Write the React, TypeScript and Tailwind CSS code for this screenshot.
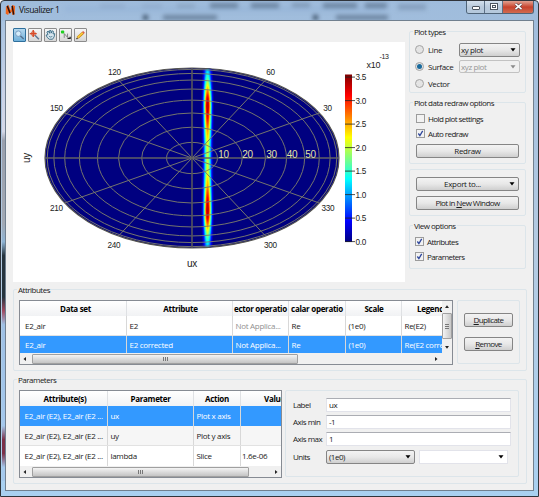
import type { ReactNode } from "react";

const CX = 179;
const CY = 116;
const RX = 147;
const RY = 90;

// peak intensity of the beam against the distance from the horizontal axis
const PROFILE = [
  [0, 0.58],
  [15, 0.62],
  [28, 0.74],
  [40, 0.9],
  [52, 1],
  [60, 0.93],
  [68, 0.74],
  [76, 0.55],
  [84, 0.4],
  [90, 0.3],
];

function intensity(dy: number) {
  const d = Math.abs(dy);
  for (let i = 1; i < PROFILE.length; i++) {
    const [x0, a0] = PROFILE[i - 1];
    const [x1, a1] = PROFILE[i];
    if (d <= x1) return a0 + ((a1 - a0) * (d - x0)) / (x1 - x0);
  }
  return 0;
}

function jet(v: number) {
  const c = (n: number) =>
    Math.round(255 * Math.max(0, Math.min(1, 1.5 - Math.abs(4 * v - n))));
  return `rgb(${c(3)},${c(2)},${c(1)})`;
}

const LEVELS = Array.from({ length: 30 }, (_, i) => 0.04 + i * 0.031);

function contour(level: number, side: 1 | -1) {
  const right: string[] = [];
  const left: string[] = [];
  for (let y = -RY; y <= RY; y += 1) {
    if (y * side < 0) continue;
    const a = intensity(y);
    const w = a > level ? 2.5 * Math.sqrt(2 * Math.log(a / level)) : 0;
    right.push(`${(194.6 + w).toFixed(2)},${CY + y}`);
    left.unshift(`${(194.6 - w).toFixed(2)},${CY + y}`);
  }
  return right.concat(left).join(" ");
}

const ANGLES = [
  { t: "120", x: 101.5, y: 32.5 },
  { t: "60", x: 257.5, y: 32.5 },
  { t: "150", x: 43.5, y: 69 },
  { t: "30", x: 314.5, y: 69 },
  { t: "210", x: 43.5, y: 169.3 },
  { t: "330", x: 315, y: 169.3 },
  { t: "240", x: 101, y: 206.3 },
  { t: "300", x: 257.5, y: 206.3 },
];

const RINGS = [
  { t: "10", x: 210.5 },
  { t: "20", x: 234.5 },
  { t: "30", x: 258.5 },
  { t: "40", x: 279 },
  { t: "50", x: 297.5 },
];

function PolarPlot() {
  return (
    <svg
      width="392"
      height="240"
      viewBox="0 0 392 240"
      className="block font-['Liberation_Sans']"
    >
      <defs>
        <clipPath id="disc">
          <ellipse cx={CX} cy={CY} rx={RX} ry={RY} />
        </clipPath>
        <linearGradient id="jet" x1="0" y1="1" x2="0" y2="0">
          {Array.from({ length: 17 }, (_, i) => (
            <stop key={i} offset={i / 16} stopColor={jet(i / 16)} />
          ))}
        </linearGradient>
      </defs>
      <rect width="392" height="240" fill="#fff" />
      <g clipPath="url(#disc)">
        <rect x="30" y="20" width="300" height="190" fill="#000080" />
        {LEVELS.map((l) => (
          <g key={l} fill={jet(l)}>
            <polygon points={contour(l, -1)} />
            <polygon points={contour(l, 1)} />
          </g>
        ))}
      </g>
      <g fill="none" stroke="#7a7a6c" strokeWidth="0.95">
        {[10, 20, 30, 40, 50, 60, 70, 80].map((d) => {
          const s = Math.sin((d * Math.PI) / 180);
          return <ellipse key={d} cx={CX} cy={CY} rx={RX * s} ry={RY * s} />;
        })}
        <ellipse cx={CX} cy={CY} rx={RX} ry={RY} stroke="#55554f" strokeWidth="1.2" />
        {[30, 60, 120, 150, 210, 240, 300, 330].map((d) => {
          const a = (d * Math.PI) / 180;
          return (
            <line
              key={d}
              x1={CX}
              y1={CY}
              x2={CX + RX * Math.cos(a)}
              y2={CY - RY * Math.sin(a)}
            />
          );
        })}
        <line x1={CX} y1={CY - RY} x2={CX} y2={CY + RY} stroke="#55555c" strokeWidth="1.6" />
        <line x1={CX - RX} y1={CY} x2={CX + RX} y2={CY} stroke="#606064" strokeWidth="1.5" />
      </g>
      <g fontSize="10" fill="#e4e4a4" textAnchor="middle">
        {RINGS.map((r) => (
          <text key={r.t} x={r.x} y="116.3">
            {r.t}
          </text>
        ))}
      </g>
      <g fontSize="8.2" fill="#222" textAnchor="middle">
        {ANGLES.map((a) => (
          <text key={a.t} x={a.x} y={a.y}>
            {a.t}
          </text>
        ))}
      </g>
      <g fontSize="10" fill="#222" textAnchor="middle">
        <text x="179" y="225">
          ux
        </text>
        <text transform="translate(16.5 116) rotate(-90)">uy</text>
      </g>
      <rect x="332" y="32.5" width="7" height="167.5" fill="url(#jet)" />
      <g fontSize="8.2" fill="#222">
        {[0, 1, 2, 3, 4, 5, 6, 7].map((i) => (
          <g key={i}>
            <line
              x1="332"
              x2="342"
              y1={199.6 - i * 23.5}
              y2={199.6 - i * 23.5}
              stroke="#222"
              strokeWidth="0.8"
            />
            <text x="342.5" y={202.6 - i * 23.5}>
              {(i / 2).toFixed(1)}
            </text>
          </g>
        ))}
        <text x="353.5" y="25.5" fontSize="9">
          x10
        </text>
        <text x="366.5" y="17" fontSize="7">
          -13
        </text>
      </g>
    </svg>
  );
}

function ToolButton({ active, children }: { active?: boolean; children: ReactNode }) {
  return (
    <div
      className={
        active
          ? "w-[13.3px] h-[14px] rounded-[1px] border border-[#2f6f9c] bg-gradient-to-b from-[#b5d8ee] to-[#6fb0da]"
          : "w-[13.3px] h-[14px] rounded-[1px] border border-[#8c8c8c] bg-gradient-to-b from-[#f6f6f6] to-[#d6d6d6]"
      }
    >
      <svg viewBox="0 0 12 12" className="block size-full" fill="none">
        {children}
      </svg>
    </div>
  );
}

function Toolbar() {
  return (
    <div className="flex gap-[2px] h-[14px]">
      <ToolButton active>
        <path d="M6.7 6.7 L10.3 10.3" stroke="#56708c" strokeWidth="1.5" />
        <circle cx="4.6" cy="4.6" r="2.9" fill="#d4ecfa" stroke="#6f93b8" strokeWidth=".9" />
      </ToolButton>
      <ToolButton>
        <path d="M6 6 L10.5 10.5" stroke="#5d7896" strokeWidth="1.6" />
        <circle cx="4.5" cy="4.5" r="2.3" fill="#f6b49c" stroke="#c86a50" strokeWidth=".8" />
        <path d="M4.5 .8 V8.2 M.8 4.5 H8.2" stroke="#d84a28" strokeWidth="1.5" />
      </ToolButton>
      <ToolButton>
        <path
          d="M3.2 5.6 L2 2.8 L3.4 1.8 L4.9 4.2 L4.9 1.2 L6.3 1.2 L6.6 4 L7.6 1.5 L9 2.2 L8.5 4.8 L10.4 4.6 L9.7 8 L8 10.5 H4.5 L2.2 8.4 L1.2 6 Z"
          fill="#d8e6ee"
          stroke="#2f6580"
          strokeWidth=".9"
        />
        <path d="M4.2 7 C5 8.6 7 8.6 7.8 7" stroke="#2f6580" strokeWidth=".8" />
      </ToolButton>
      <ToolButton>
        <path d="M4.5 4.5 V9 M4.5 4.5 L8 8.5 V4.5" stroke="#777" strokeWidth=".9" />
        <rect x="1" y="1.2" width="3.5" height="3.2" rx="1" fill="#20d020" />
        <path d="M8 9.5 H10.8 V7.8" stroke="#222" strokeWidth="1.3" />
      </ToolButton>
      <ToolButton>
        <path d="M2.8 9 L8.6 3.6" stroke="#c88a10" strokeWidth="2.8" />
        <path d="M3 8.6 L8.6 3.4" stroke="#ffd040" strokeWidth="1.5" />
        <path d="M8.3 3.9 L9.6 2.7" stroke="#d8604c" strokeWidth="2.6" />
        <path d="M1.5 10.3 L2.8 9.1" stroke="#5a4a30" strokeWidth="1.5" />
      </ToolButton>
    </div>
  );
}

function Group({
  title,
  className,
  children,
}: {
  title?: string;
  className: string;
  children: ReactNode;
}) {
  return (
    <div className={"relative rounded-[2px] border border-[#dce5ea] " + className}>
      {title && (
        <span className="absolute left-[3px] -top-[6px] h-[11px] leading-[11px] px-px bg-[#f0f0f0] tracking-[-0.5px]">
          {title}
        </span>
      )}
      {children}
    </div>
  );
}

function Arrow({ className = "text-black" }: { className?: string }) {
  return (
    <svg width="6" height="4" viewBox="0 0 6 4" className={"shrink-0 " + className}>
      <path d="M.5 .2 H5.5 L3 3.6 Z" fill="currentColor" />
    </svg>
  );
}

function Button({ className, children }: { className: string; children: ReactNode }) {
  return (
    <div
      className={
        "flex items-center justify-center h-[14px] rounded-[2px] border border-[#858585] bg-gradient-to-b from-[#f3f3f3] via-[#e8e8e8] to-[#cfcfcf] " +
        className
      }
    >
      {children}
    </div>
  );
}

function Radio({ label, on }: { label: string; on?: boolean }) {
  return (
    <div className="flex items-center gap-[4px] w-[44px]">
      <span className="flex items-center justify-center size-[9px] rounded-full border border-[#a4a4a4] bg-[#e4e4e4]">
        {on && <span className="size-[5px] rounded-full bg-[#1a6a9c]" />}
      </span>
      {label}
    </div>
  );
}

function Check({ label, on }: { label: string; on?: boolean }) {
  return (
    <div className="flex items-center gap-[3px] h-[15px]">
      <span className="size-[9px] border border-[#9c9c9c] bg-[#f2f2f2]">
        {on && (
          <svg viewBox="0 0 8 8" className="block size-full">
            <path d="M1.5 4 L3.3 6.3 L6.5 1" fill="none" stroke="#30489c" strokeWidth="1.5" />
          </svg>
        )}
      </span>
      {label}
    </div>
  );
}

function Sidebar() {
  return (
    <div className="w-[117px] ml-[4px] mt-[10px] tracking-[-0.58px]">
      <Group title="Plot types" className="h-[62px] pt-[9px] pl-[5px]">
        <div className="flex items-center h-[17px] tracking-[-0.4px]">
          <Radio label="Line" />
          <Button className="w-[61px] h-[13px] justify-between! pl-[1px] pr-[3px]">
            xy plot <Arrow />
          </Button>
        </div>
        <div className="flex items-center h-[17px] tracking-[-0.4px]">
          <Radio label="Surface" on />
          <div className="flex items-center justify-between w-[61px] h-[13px] border border-[#c2c2c2] rounded-[2px] pl-[1px] pr-[3px] text-[#969696]">
            xyz plot <Arrow className="text-[#8a8a8a]" />
          </div>
        </div>
        <div className="flex items-center h-[17px] tracking-[-0.4px]">
          <Radio label="Vector" />
        </div>
      </Group>
      <Group title="Plot data redraw options" className="h-[62px] mt-[9px] pt-[8px] pl-[6px]">
        <Check label="Hold plot settings" />
        <Check label="Auto redraw" on />
        <Button className="w-[103px] mt-[3px] tracking-[-0.3px]">Redraw</Button>
      </Group>
      <Group className="h-[47px] mt-[5px] pt-[7px] pl-[6px]">
        <Button className="w-[103px] justify-between! pl-[27px] pr-[3px] tracking-[-0.3px]">
          Export to... <Arrow />
        </Button>
        <Button className="w-[103px] mt-[5px]">
          <span>
            Plot in <u>N</u>ew Window
          </span>
        </Button>
      </Group>
      <Group title="View options" className="h-[44px] mt-[9px] pt-[8px] pl-[5px]">
        <Check label="Attributes" on />
        <Check label="Parameters" on />
      </Group>
    </div>
  );
}

function HScroll({ thumb, className }: { thumb: string; className: string }) {
  return (
    <div className={"flex items-center h-[11px] bg-[#f0f0f0] px-[3px] " + className}>
      <svg width="3" height="4" viewBox="0 0 3 4" className="mr-[6px]">
        <path d="M3 0 V4 L.5 2 Z" fill="#222" />
      </svg>
      <div
        className={
          "flex items-center justify-center gap-px h-[10px] rounded-[1px] border border-[#a0a0a0] bg-gradient-to-b from-[#f4f4f4] to-[#c4c4c4] " +
          thumb
        }
      >
        <i className="w-px h-[4px] bg-[#777]" />
        <i className="w-px h-[4px] bg-[#777]" />
        <i className="w-px h-[4px] bg-[#777]" />
      </div>
      <svg width="3" height="4" viewBox="0 0 3 4" className="ml-auto">
        <path d="M0 0 V4 L2.5 2 Z" fill="#222" />
      </svg>
    </div>
  );
}

const headRow =
  "grid bg-gradient-to-b from-white to-[#f1f2f4] font-bold text-center text-black";
const headCell =
  "flex items-center justify-center overflow-hidden border-r border-[#dfe1e4]";
const cell = "flex items-center overflow-hidden pl-[2.5px] border-r border-[#d8d8d8]";

const attrCols = "grid-cols-[107px_106px_56px_57px_56px_40px]";
const attrRows = [
  ["E2_air", "E2", "Not Applica...", "Re", "(1e0)", "Re(E2)"],
  ["E2_air", "E2 corrected", "Not Applica...", "Re", "(1e0)", "Re(E2 corrected)"],
];

function AttributeTable() {
  return (
    <div className="flex flex-col w-[434px] h-[65px] border border-[#868b93] bg-white">
      <div className="flex h-[52px]">
        <div className="w-[422px] overflow-hidden">
          <div className={headRow + " h-[15px] " + attrCols}>
            <span className={headCell + " pl-[5px]"}>Data set</span>
            <span className={headCell + " pl-[2px]"}>Attribute</span>
            <span className={headCell}>ector operatio</span>
            <span className={headCell}>calar operatio</span>
            <span className={headCell + " pl-[1px]"}>Scale</span>
            <span className={headCell + " justify-start! pl-[15px] border-r-0!"}>Legend</span>
          </div>
          {attrRows.map((row, r) => (
            <div
              key={r}
              className={
                "grid " +
                attrCols +
                (r === 1 ? " h-[18px] bg-[#3399ff] text-white" : " h-[20px] border-b border-[#e2e2e2]")
              }
            >
              {row.map((t, c) => (
                <span
                  key={c}
                  className={
                    cell +
                    (c === 0 ? " pl-[5px]!" : "") +
                    (c === 5 ? " border-r-0!" : "") +
                    (c === 2 && r === 0 ? " text-[#909090]" : "")
                  }
                >
                  {t}
                </span>
              ))}
            </div>
          ))}
        </div>
        <div className="flex flex-col items-center w-[10px] bg-[#f0f0f0] pt-[4px]">
          <svg width="4" height="3" viewBox="0 0 4 3">
            <path d="M0 3 H4 L2 .3 Z" fill="#222" />
          </svg>
          <div className="flex flex-col items-center justify-center gap-px mt-[5px] w-[10px] h-[26px] rounded-[1px] border border-[#a0a0a0] bg-gradient-to-r from-[#f4f4f4] to-[#c8c8c8]">
            <i className="w-[4px] h-px bg-[#777]" />
            <i className="w-[4px] h-px bg-[#777]" />
            <i className="w-[4px] h-px bg-[#777]" />
          </div>
          <svg width="4" height="3" viewBox="0 0 4 3" className="mt-[7px]">
            <path d="M0 0 H4 L2 2.7 Z" fill="#222" />
          </svg>
        </div>
      </div>
      <HScroll thumb="w-[266px]" className="pr-[14px]" />
    </div>
  );
}

const paramCols = "grid-cols-[88px_86px_47px_40px]";
const paramRows = [
  ["ux", "Plot x axis", ""],
  ["uy", "Plot y axis", ""],
  ["lambda", "Slice", "1.6e-06"],
];

function ParameterTable() {
  return (
    <div className="w-[263px] h-[88px] border border-[#868b93] bg-white">
      <div className={headRow + " h-[15px] " + paramCols}>
        <span className={headCell + " pl-[3px]"}>Attribute(s)</span>
        <span className={headCell}>Parameter</span>
        <span className={headCell}>Action</span>
        <span className={headCell + " justify-start! pl-[23px] border-r-0!"}>Value</span>
      </div>
      {paramRows.map((row, r) => (
        <div
          key={row[0]}
          className={
            "grid " +
            paramCols +
            (r === 0
              ? " h-[20px] bg-[#3399ff] text-white"
              : r === 1
                ? " h-[20px] bg-[#f6f6f6] border-b border-[#e2e2e2]"
                : " h-[20px]")
          }
        >
          <span className={cell + " pl-[4.5px]!"}>E2_air (E2), E2_air (E2 ...</span>
          <span className={cell}>{row[0]}</span>
          <span className={cell}>{row[1]}</span>
          <span className={cell + " pl-[1px]! border-r-0!"}>{row[2]}</span>
        </div>
      ))}
      <HScroll thumb="w-[217px]" className="" />
    </div>
  );
}

function Field({ label, value }: { label: string; value: string }) {
  return (
    <div className="flex items-center h-[17.3px]">
      <span className="w-[33px]">{label}</span>
      <div className="flex items-center w-[185px] h-[14px] pl-[2px] bg-white border border-[#e2e3ea] border-t-[#abadb3]">
        {value}
      </div>
    </div>
  );
}

function TitleBar() {
  return (
    <div className="relative h-[19px] flex items-center overflow-hidden pb-[2px]">
      <div className="absolute inset-0 blur-[2px]">
        <span className="absolute left-[60px] top-[5px] w-[320px] h-[6px] bg-[#8fb0d4]/40" />
        <span className="absolute left-[95px] top-[3px] w-[25px] h-[4px] bg-[#8199b8]/40" />
        <span className="absolute left-[137px] top-[3px] w-[20px] h-[4px] bg-[#8199b8]/40" />
        <span className="absolute left-[172px] top-[3px] w-[18px] h-[4px] bg-[#71879f]/40" />
        <span className="absolute left-[205px] top-[2px] w-[28px] h-[5px] bg-[#4b6079]/60" />
        <span className="absolute left-[246px] top-[2px] w-[28px] h-[5px] bg-[#4b6079]/60" />
        <span className="absolute left-[287px] top-[2px] w-[18px] h-[4px] bg-[#4b6079]/40" />
        <span className="absolute left-[318px] top-[2px] w-[34px] h-[5px] bg-[#4b6079]/60" />
        <span className="absolute left-[360px] top-[2px] w-[22px] h-[5px] bg-[#4b6079]/60" />
        <span className="absolute left-[393px] top-[3px] w-[28px] h-[6px] bg-[#6d86a4]/50" />
        <span className="absolute left-[138px] top-[14px] w-[5px] h-[5px] bg-[#26384c]/80" />
        <span className="absolute left-[158px] top-[14px] w-[54px] h-[5px] bg-[#4b6079]/60" />
        <span className="absolute left-[308px] top-[14px] w-[5px] h-[5px] bg-[#26384c]/80" />
        <span className="absolute left-[331px] top-[14px] w-[52px] h-[5px] bg-[#4b6079]/60" />
      </div>
      <svg width="11" height="12" viewBox="0 0 12 13" className="relative">
        <path d="M1 3 L4 1 L6 7 L8 1 L11 2 L10.5 11 L8 12 L7.5 8 L6 10 L4.5 8 L3.5 12 L.8 10.5 Z" fill="#f0641c" />
        <path d="M2.5 2 L5.5 10 M7.8 2 L9.5 11.5" stroke="#2c0e08" strokeWidth="1.6" />
      </svg>
      <span className="relative ml-[3px] text-[8.6px] tracking-[-0.4px] text-[#111]">
        Visualizer 1
      </span>
    </div>
  );
}

function WindowButtons() {
  return (
    <div className="absolute left-[465px] top-0 flex w-[68px] h-[12.5px] rounded-b-[3px] border border-t-0 border-[#4f6478] overflow-hidden">
      <span className="flex items-center justify-center w-[18px] border-r border-[#5c7086] bg-gradient-to-b from-[#d3e0ed] via-[#b9cadc] to-[#b4c8dc]">
        <i className="w-[8px] h-[4px] mt-[2px] rounded-[1px] border border-[#4c5560] bg-white" />
      </span>
      <span className="flex items-center justify-center w-[18px] border-r border-[#5c7086] bg-gradient-to-b from-[#d3e0ed] via-[#b9cadc] to-[#b4c8dc]">
        <i className="flex items-center justify-center w-[8px] h-[7px] border border-[#4c5560] bg-white">
          <i className="w-[4px] h-[3px] border border-[#4c5560]" />
        </i>
      </span>
      <span className="flex flex-1 items-center justify-center bg-gradient-to-b from-[#e0a090] via-[#c8412c] to-[#d06a50]">
        <svg width="9" height="7" viewBox="0 0 9 7">
          <path d="M1.5 .8 L7.5 6.2 M7.5 .8 L1.5 6.2" stroke="#4a3a44" strokeWidth="2.8" />
          <path d="M1.5 .8 L7.5 6.2 M7.5 .8 L1.5 6.2" stroke="#fff" strokeWidth="1.6" />
        </svg>
      </span>
    </div>
  );
}

export default function App() {
  return (
    <div className="relative w-[539px] h-[497px] overflow-hidden rounded-t-[4px] border border-[#30343a] bg-gradient-to-b from-[#9fbcdc] via-[#b4cbe2] to-[#a9d0f0] px-[4px] font-['Open_Sans','Noto_Sans',sans-serif] text-[8px] leading-[10px] tracking-[-0.3px] text-[#1a1a1a] whitespace-nowrap">
      {/* desktop showing through the glass frame */}
      <div className="absolute left-[1px] top-[20px] w-[3px] h-[460px] bg-[linear-gradient(#a9c3e0,#c9d2e6_15%,#d5d9e8_24%,#9aa0ad_26%,#a2a9b4_44%,#8fb4d4_48%,#26333d_51%,#26333d_60%,#a04a60_63%,#9fc0e4_66%,#a5c8ec_88%,#7c3048_91%,#7c3048_94%,#a5c8ec_97%)]" />
      <TitleBar />
      <WindowButtons />
      <div className="h-[471px] border border-[#71808f] bg-[#f0f0f0] pl-[7px]">
        <div className="flex h-[261px]">
          <div className="pt-[7px]">
            <Toolbar />
            <PolarPlot />
          </div>
          <Sidebar />
        </div>
        <Group title="Attributes" className="w-[514px] h-[82px] mt-[7px] pt-[10px] pl-[5px] flex">
          <AttributeTable />
          <Group className="w-[63px] h-[64px] ml-[4px] pt-[12px] pl-[6px] tracking-[-0.6px]">
            <Button className="w-[49px]">
              <span>
                <u>D</u>uplicate
              </span>
            </Button>
            <Button className="w-[49px] mt-[10px]">
              <span>
                <u>R</u>emove
              </span>
            </Button>
          </Group>
        </Group>
        <Group title="Parameters" className="w-[514px] h-[105px] mt-[8px] pt-[10px] pl-[5px] flex">
          <ParameterTable />
          <Group className="w-[234px] h-[87px] ml-[3px] pt-[5px] pl-[7px] tracking-[-0.5px]">
            <Field label="Label" value="ux" />
            <Field label="Axis min" value="-1" />
            <Field label="Axis max" value="1" />
            <div className="flex items-center h-[17.3px]">
              <span className="w-[33px]">Units</span>
              <Button className="w-[89px] justify-between! pl-[2px] pr-[3px]">
                (1e0) <Arrow />
              </Button>
              <div className="flex items-center justify-end w-[89px] h-[14px] ml-[4px] pr-[3px] border border-[#e2e3ea] bg-white">
                <Arrow />
              </div>
            </div>
          </Group>
        </Group>
      </div>
    </div>
  );
}
